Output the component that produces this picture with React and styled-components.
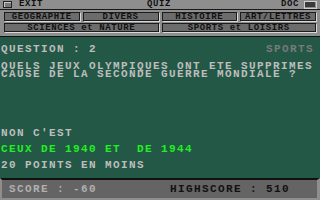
import React from 'react'
import styled, { createGlobalStyle } from 'styled-components'

const Global = createGlobalStyle`
  html, body { margin: 0; padding: 0; background: #000; }
  #root { width: 320px; height: 200px; overflow: hidden; }
`

const font = `"Liberation Mono", "DejaVu Sans Mono", monospace`

const Screen = styled.div`
  width: 320px;
  height: 200px;
  display: flex;
  flex-direction: column;
  background: #000;
  font-family: ${font};
  font-weight: bold;
`

const TitleBar = styled.div`
  height: 9px;
  background: #8e8e8e;
  border-bottom: 1px solid #1a1a1a;
  display: flex;
  align-items: center;
  position: relative;
  font-size: 9px;
  letter-spacing: 0.6px;
  line-height: 9px;
  color: #111;
`

const CloseGadget = styled.div`
  width: 7px;
  height: 5px;
  margin: 0 7px 0 3px;
  border: 1px solid #222;
  background: #7a7a7a;
  box-shadow: inset 1px 1px 0 #c8c8c8;
`

const Title = styled.span`
  position: absolute;
  left: 147px;
  top: 0;
`

const TitleRight = styled.div`
  margin-left: auto;
  display: flex;
  align-items: center;
  gap: 5px;
  padding-right: 3px;
`

const DepthGadget = styled.div`
  width: 11px;
  height: 6px;
  border: 1px solid #d0d0d0;
  background: #3a3a3a;
  box-shadow: inset -1px -1px 0 #8e8e8e;
`

const Panel = styled.div`
  height: 27px;
  background: #8e8e8e;
  border-bottom: 1px solid #111;
  display: grid;
  grid-template-columns: repeat(4, 1fr);
  grid-auto-rows: 9px;
  gap: 2px 3px;
  padding: 2px 4px 3px 4px;
  box-sizing: border-box;
`

const Btn = styled.div`
  grid-column: span ${p => p.$span || 1};
  background: #6c6c6c;
  border: 1px solid #1c1c1c;
  box-shadow: 1px 1px 0 #d8d8d8;
  color: #111;
  font-size: 9px;
  letter-spacing: 0.6px;
  line-height: 9px;
  text-align: center;
  white-space: nowrap;
  overflow: hidden;
`

const Board = styled.div`
  height: 141px;
  background: #235746;
  padding-top: 8px;
  box-sizing: border-box;
  color: #bdbdbd;
  font-size: 11px;
  letter-spacing: 1.4px;
`

const Line = styled.div`
  height: 8px;
  line-height: 8px;
  margin-top: ${p => p.$mt || 0}px;
  padding-left: 1px;
  white-space: pre;
  color: ${p => (p.$green ? '#22f022' : '#bdbdbd')};
`

const Para = styled.div`
  margin-top: 9px;
  padding-left: 1px;
  line-height: 8px;
  white-space: pre-line;
`

const HeaderLine = styled(Line)`
  display: flex;
  justify-content: space-between;
  padding-right: 6px;
`

const Category = styled.span`
  color: #7a7a7a;
`

const ScoreBar = styled.div`
  flex: 1;
  background: #646464;
  border-top: 2px solid #111;
  border-left: 2px solid #8e8e8e;
  border-right: 3px solid #8e8e8e;
  border-bottom: 2px solid #8e8e8e;
  display: flex;
  align-items: center;
  padding: 0 0 0 7px;
  font-size: 11px;
  letter-spacing: 1.4px;
  line-height: 8px;
`

const Score = styled.span`
  color: #b0b0b0;
  width: 161px;
`

const High = styled.span`
  color: #111;
`

export default function App() {
  return (
    <>
      <Global />
      <Screen>
        <TitleBar>
          <CloseGadget />
          <span>EXIT</span>
          <Title>QUIZ</Title>
          <TitleRight>
            <span>DOC</span>
            <DepthGadget />
          </TitleRight>
        </TitleBar>
        <Panel>
          <Btn>GEOGRAPHIE</Btn>
          <Btn>DIVERS</Btn>
          <Btn>HISTOIRE</Btn>
          <Btn>ART/LETTRES</Btn>
          <Btn $span={2}>SCIENCES et NATURE</Btn>
          <Btn $span={2}>SPORTS et LOISIRS</Btn>
        </Panel>
        <Board>
          <HeaderLine>
            <span>QUESTION : 2</span>
            <Category>SPORTS</Category>
          </HeaderLine>
          <Para>{'QUELS JEUX OLYMPIQUES ONT ETE SUPPRIMES\nCAUSE DE LA SECONDE GUERRE MONDIALE ?'}</Para>
          <Line $mt={51}>NON C'EST</Line>
          <Line $mt={8} $green>CEUX DE 1940 ET  DE 1944</Line>
          <Line $mt={8}>20 POINTS EN MOINS</Line>
        </Board>
        <ScoreBar>
          <Score>SCORE : -60</Score>
          <High>HIGHSCORE : 510</High>
        </ScoreBar>
      </Screen>
    </>
  )
}
